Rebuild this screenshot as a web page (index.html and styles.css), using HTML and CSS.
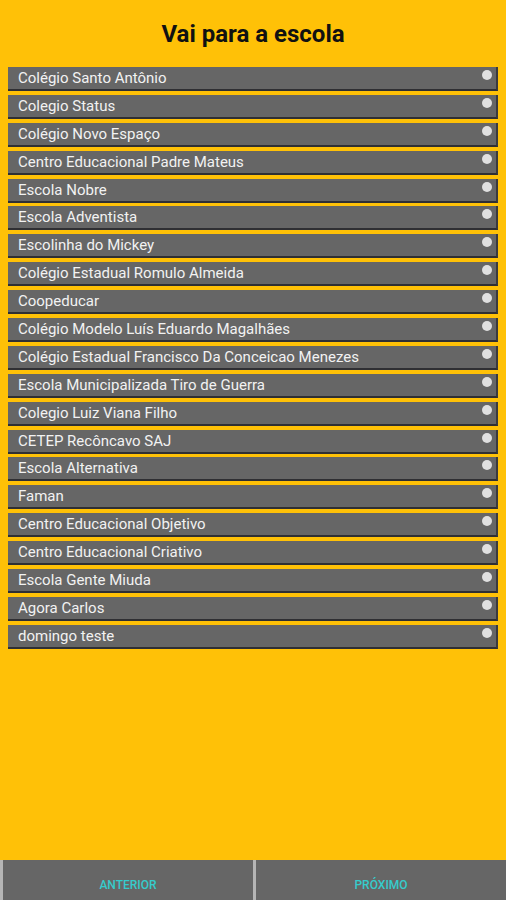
FILE: index.html
```html
<!DOCTYPE html>
<html lang="pt">
<head>
<meta charset="utf-8">
<title>Vai para a escola</title>
<link rel="stylesheet" href="styles.css">
</head>
<body>
<div class="screen">
  <h1 class="title">Vai para a escola</h1>
  <ul class="list">
    <li class="item"><span>Colégio Santo Antônio</span><i class="dot"></i></li>
    <li class="item"><span>Colegio Status</span><i class="dot"></i></li>
    <li class="item"><span>Colégio Novo Espaço</span><i class="dot"></i></li>
    <li class="item"><span>Centro Educacional Padre Mateus</span><i class="dot"></i></li>
    <li class="item"><span>Escola Nobre</span><i class="dot"></i></li>
    <li class="item"><span>Escola Adventista</span><i class="dot"></i></li>
    <li class="item"><span>Escolinha do Mickey</span><i class="dot"></i></li>
    <li class="item"><span>Colégio Estadual Romulo Almeida</span><i class="dot"></i></li>
    <li class="item"><span>Coopeducar</span><i class="dot"></i></li>
    <li class="item"><span>Colégio Modelo Luís Eduardo Magalhães</span><i class="dot"></i></li>
    <li class="item"><span>Colégio Estadual Francisco Da Conceicao Menezes</span><i class="dot"></i></li>
    <li class="item"><span>Escola Municipalizada Tiro de Guerra</span><i class="dot"></i></li>
    <li class="item"><span>Colegio Luiz Viana Filho</span><i class="dot"></i></li>
    <li class="item"><span>CETEP Recôncavo SAJ</span><i class="dot"></i></li>
    <li class="item"><span>Escola Alternativa</span><i class="dot"></i></li>
    <li class="item"><span>Faman</span><i class="dot"></i></li>
    <li class="item"><span>Centro Educacional Objetivo</span><i class="dot"></i></li>
    <li class="item"><span>Centro Educacional Criativo</span><i class="dot"></i></li>
    <li class="item"><span>Escola Gente Miuda</span><i class="dot"></i></li>
    <li class="item"><span>Agora Carlos</span><i class="dot"></i></li>
    <li class="item"><span>domingo teste</span><i class="dot"></i></li>
  </ul>
  <div class="footer">
    <button class="nav-btn">ANTERIOR</button>
    <button class="nav-btn">PRÓXIMO</button>
  </div>
</div>
</body>
</html>
```
FILE: styles.css
```css
html, body {
  margin: 0;
  padding: 0;
}
body {
  background: #ffc107;
  font-family: Roboto, "Noto Sans", Arial, sans-serif;
}
.screen {
  height: 900px;
  display: flex;
  flex-direction: column;
}
.title {
  margin: 0;
  padding-top: 19px;
  height: 30px;
  line-height: 30px;
  font-size: 24px;
  font-weight: 700;
  color: #111;
  text-align: center;
}
.list {
  list-style: none;
  margin: 0;
  padding: 18px 8px 0 8px;
  display: flex;
  flex-direction: column;
  gap: 3.9px;
  flex: 1;
}
.item {
  height: 22px;
  background: #666666;
  border-bottom: 2px solid #2f2f33;
  border-right: 2px solid #3a3a3e;
  display: flex;
  justify-content: space-between;
  align-items: flex-start;
  padding-left: 10px;
  padding-right: 4px;
}
.item span {
  line-height: 22px;
  font-size: 15px;
  color: #f2f2f2;
}
.dot {
  width: 10px;
  height: 10px;
  margin-top: 3px;
  border-radius: 50%;
  background: #e0e0e0;
}
.footer {
  height: 40px;
  display: grid;
  grid-template-columns: 253px 1fr;
}
.nav-btn {
  margin: 0;
  border: 0;
  border-left: 3px solid #b5b5b5;
  background: #666666;
  color: #35cccc;
  font-family: Roboto, "Noto Sans", Arial, sans-serif;
  font-size: 12px;
  font-weight: 500;
  padding: 9px 0 0 0;
}
```
